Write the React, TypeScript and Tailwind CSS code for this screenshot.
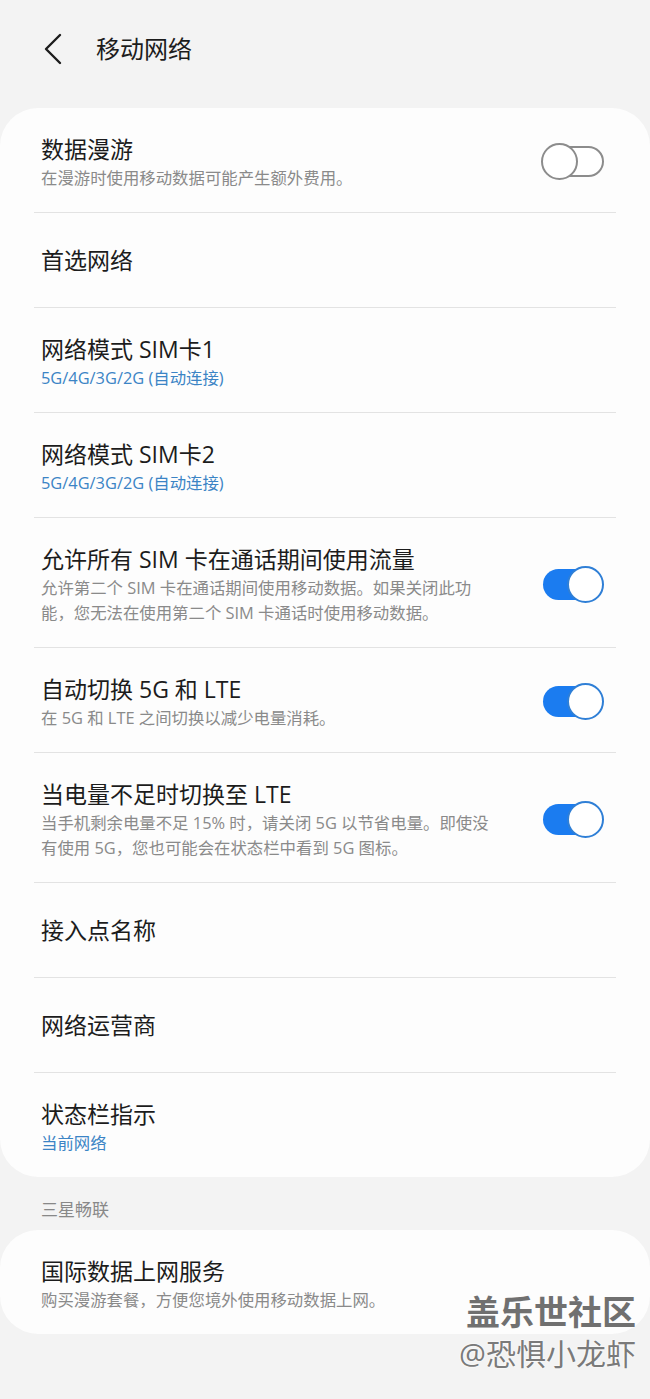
import React from "react";

type Row = {
  title: string;
  sub?: string[];
  blue?: boolean;
  toggle?: "on" | "off";
};

const rows: Row[] = [
  { title: "数据漫游", sub: ["在漫游时使用移动数据可能产生额外费用。"], toggle: "off" },
  { title: "首选网络" },
  { title: "网络模式 SIM卡1", sub: ["5G/4G/3G/2G (自动连接)"], blue: true },
  { title: "网络模式 SIM卡2", sub: ["5G/4G/3G/2G (自动连接)"], blue: true },
  {
    title: "允许所有 SIM 卡在通话期间使用流量",
    sub: ["允许第二个 SIM 卡在通话期间使用移动数据。如果关闭此功", "能，您无法在使用第二个 SIM 卡通话时使用移动数据。"],
    toggle: "on",
  },
  { title: "自动切换 5G 和 LTE", sub: ["在 5G 和 LTE 之间切换以减少电量消耗。"], toggle: "on" },
  {
    title: "当电量不足时切换至 LTE",
    sub: ["当手机剩余电量不足 15% 时，请关闭 5G 以节省电量。即使没", "有使用 5G，您也可能会在状态栏中看到 5G 图标。"],
    toggle: "on",
  },
  { title: "接入点名称" },
  { title: "网络运营商" },
  { title: "状态栏指示", sub: ["当前网络"], blue: true },
];

const Toggle = ({ on }: { on: boolean }) => {
  return (
    <div className="relative w-[64px] h-[37px] shrink-0">
      {on ? (
        <>
          <div className="absolute left-[2px] right-[6px] top-[3px] bottom-[3px] rounded-full bg-[#1b7cf0]" />
          <div className="absolute right-[1px] top-0 w-[37px] h-[37px] rounded-full bg-white border-2 border-[#2f7fd6]" />
        </>
      ) : (
        <>
          <div className="absolute left-[6px] right-[1px] top-[3px] bottom-[3px] rounded-full border-2 border-[#8c8c8c] bg-white" />
          <div className="absolute left-0 top-0 w-[37px] h-[37px] rounded-full bg-white border-2 border-[#8c8c8c]" />
        </>
      )}
    </div>
  );
};

const Item = ({ row, last }: { row: Row; last: boolean }) => {
  return (
    <div>
      {row.sub ? (
        <div className="flex items-center pl-[41px] pr-[45px] pt-[25px] pb-[22px] gap-4">
          <div className="flex-1 min-w-0">
            <div className="text-[23px] leading-[32px] text-[#1c1c1c]">{row.title}</div>
            {row.sub.map((line, i) => (
              <div
                key={i}
                className={`text-[16.4px] leading-[25px] whitespace-nowrap ${
                  row.blue ? "text-[#3b84c5]" : "text-[#8a8a8a]"
                }`}
              >
                {line}
              </div>
            ))}
          </div>
          {row.toggle && <Toggle on={row.toggle === "on"} />}
        </div>
      ) : (
        <div className="flex items-center h-[94px] pl-[41px] pr-[45px]">
          <div className="text-[23px] leading-[32px] text-[#1c1c1c]">{row.title}</div>
        </div>
      )}
      {!last && <div className="mx-[34px] h-px bg-[#e3e3e3]" />}
    </div>
  );
};

const App = () => {
  return (
    <div
      className="relative w-[650px] min-h-[1399px] bg-[#f3f3f3]"
      style={{ fontFamily: '"Open Sans", "Noto Sans CJK SC", sans-serif' }}
    >
      <div className="flex items-center h-[98px] pl-[43px]">
        <svg width="20" height="32" viewBox="0 0 20 32" className="mr-[33px]">
          <path d="M17 2 L3 16 L17 30" fill="none" stroke="#1c1c1c" strokeWidth="2.4" strokeLinecap="round" strokeLinejoin="round" />
        </svg>
        <div className="text-[24px] text-[#1c1c1c]">移动网络</div>
      </div>

      <div className="mt-[10px] bg-[#fdfdfd] rounded-[38px]">
        {rows.map((r, i) => (
          <Item key={i} row={r} last={i === rows.length - 1} />
        ))}
      </div>

      <div className="pl-[41px] pt-[22px] pb-[9px] text-[17px] leading-[22px] text-[#888888]">三星畅联</div>

      <div className="bg-[#fdfdfd] rounded-[38px]">
        <Item row={{ title: "国际数据上网服务", sub: ["购买漫游套餐，方便您境外使用移动数据上网。"] }} last={true} />
      </div>

      <div className="absolute right-[14px] top-[1290px] flex flex-col items-end pointer-events-none">
        <div
          className="text-[34px] leading-[44px] font-bold text-[#707070]"
          style={{ textShadow: "0 0 2px #fff, 0 0 2px #fff" }}
        >
          盖乐世社区
        </div>
        <div
          className="text-[30px] leading-[40px] text-[#7a7a7a]"
          style={{ textShadow: "0 0 2px #fff, 0 0 2px #fff" }}
        >
          @恐惧小龙虾
        </div>
      </div>
    </div>
  );
};

export default App;
